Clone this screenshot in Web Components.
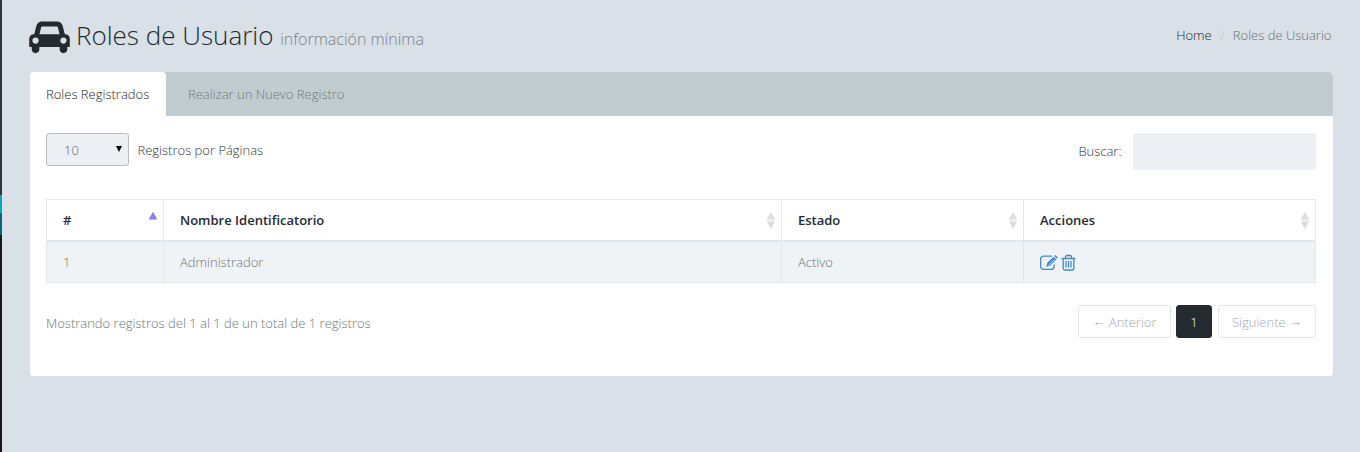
<!DOCTYPE html>
<html lang="es"><head><meta charset="utf-8"><title>Roles de Usuario</title>
<style>html,body{margin:0;height:452px;overflow:hidden}body{background:#d9e0e7;font:300 13px/18px "Open Sans",sans-serif;color:#707478}</style></head>
<body><app-shell>
<page-header slot="header">Roles de Usuario<span slot="subtitle">información mínima</span></page-header>
<tab-panel><table-tools></table-tools><roles-table></roles-table><table-footer></table-footer></tab-panel>
</app-shell>
<script>
const define=(name,html)=>customElements.define(name,class extends HTMLElement{
  constructor(){super();this.attachShadow({mode:'open'}).innerHTML='<style>*{box-sizing:border-box}</style>'+html;}
});
define('app-shell',`<style>:host{display:flex;height:452px}
.rail{width:2px;flex:none;background:linear-gradient(#2d353c 0 195px,#00acac 195px 213px,#006b6d 213px 235px,#14181d 235px)}
main{flex:1;padding:0 27px 0 28px}</style><div class="rail"></div><main><slot name="header"></slot><slot></slot></main>`);
define('page-header',`<style>:host{display:flex;justify-content:space-between;height:72px;color:#242a30}
.l{display:flex}svg{width:41px;height:35.500px;margin:19px 6px 0 -1px}
h1{margin:17px 0 0;font-weight:300;font-size:26px;line-height:36px;white-space:nowrap}small{font-size:16px;color:#7b8289}
nav{display:flex;margin:26px 1.500px 0 0;height:18px;color:#242a30}nav i{font-style:normal;color:#c0c4c9;padding:0 8.300px}nav span{color:#6c7074}</style>
<div class="l"><svg viewBox="0 0 2048 1792" fill="#242a30"><path d="M480 1088q0-66-47-113t-113-47-113 47-47 113 47 113 113 47 113-47 47-113zm36-320h1016l-89-357q-2-8-14-17.500t-21-9.500h-768q-9 0-21 9.500t-14 17.500zm1372 320q0-66-47-113t-113-47-113 47-47 113 47 113 113 47 113-47 47-113zm160-96v384q0 14-9 23t-23 9h-96v128q0 80-56 136t-136 56-136-56-56-136v-128h-1024v128q0 80-56 136t-136 56-136-56-56-136v-128h-96q-14 0-23-9t-9-23v-384q0-93 65.500-158.500t158.500-65.500h28l105-419q23-94 104-157.500t179-63.500h768q98 0 179 63.500t104 157.500l105 419h28q93 0 158.500 65.500t65.500 158.500z"/></svg>
<h1><slot></slot> <small><slot name="subtitle"></slot></small></h1></div><nav>Home<i>/</i><span>Roles de Usuario</span></nav>`);
define('tab-panel',`<style>:host{display:block;height:304px;background:#fff;border-radius:5px 5px 3px 3px}
.tabs{display:flex;height:44px;background:#c1ccd1;border-radius:5px 5px 0 0;line-height:44px;color:#6e787d}
.a{width:136px;padding-left:16px;background:#fff;color:#242a30;border-radius:4px 4px 0 0;margin-right:22px}.body{padding:17px 17px 0 16px}</style>
<div class="tabs"><div class="a">Roles Registrados</div><div>Realizar un Nuevo Registro</div></div><div class="body"><slot></slot></div>`);
define('table-tools',`<style>:host{display:flex;height:66px;color:#33383e;align-items:flex-start}
.s{width:83px;height:33px;border:1px solid #b8bdc2;border-radius:3px;background:#ecf0f5;display:flex;justify-content:space-between;padding:0 5px 0 17px;line-height:33px;color:#666}
svg{width:8px;height:6px;margin-top:12px}.t{margin:8px auto 0 8.500px}.b{margin:9px 11.500px 0 0}.f{width:183px;height:37px;border-radius:3px;background:#ecf0f5}</style>
<div class="s">10<svg viewBox="0 0 8 6"><path d="M1 0h6L4 6z"/></svg></div><div class="t">Registros por Páginas</div><div class="b">Buscar:</div><div class="f"></div>`);
define('sort-mark',`<style>:host{display:block;width:10px;height:17px}svg{display:block}.up{display:none}:host([up]) .up{display:block}:host([up]) .both{display:none}</style>
<svg class="both" width="10" height="17" viewBox="0 0 10 17" fill="#dcdcdc"><path d="M5 0l4 7H1zM1 10h8l-4 7z"/><path d="M1 7h8v3H1z" fill="#eee"/></svg>
<svg class="up" width="10" height="17" viewBox="0 0 10 17"><path d="M5 -.3L9.300 7.500H.7z" fill="#8084ea"/></svg>`);
define('action-icons',`<style>:host{display:flex;color:#428bca}svg{display:block;fill:none;stroke:currentColor}</style>
<svg width="21" height="18" viewBox="0 0 21 18"><path d="M12 2.100H3.600a3 3 0 0 0-3 3v7.300a3 3 0 0 0 3 3h7.500a3 3 0 0 0 3-3V10.500" stroke-width="1.300"/><path d="M6.300 12.900l1-4.200 6.300-6 2.800 2.800-6.300 6zM14.200 2l1.200-1 2.500 2.500-1 1.200z" fill="currentColor" stroke="none"/><path d="M8.700 11L14.200 5.700" stroke="#eff3f6" stroke-width=".7"/></svg>
<svg width="15" height="18" viewBox="0 0 15 18"><path d="M.5 4.500h14M2.200 5v9.500a1.500 1.500 0 0 0 1.500 1.500h7.600a1.500 1.500 0 0 0 1.500-1.500V5M4.500 4.500V3A1.500 1.500 0 0 1 6 1.500h3A1.500 1.500 0 0 1 10.500 3v1.500M5 7v6.500M7.500 7v6.500M10 7v6.500" stroke-width="1.300"/></svg>`);
define('roles-table',`<style>:host{display:block}.g{display:grid;grid-template-columns:117px 618px 242px 293px;width:1270px;height:84px;grid-template-rows:42px 40px;border:solid #e2e7eb;border-width:1px 0 1px 0}
.g>div{border-left:1px solid #e2e7eb;padding-left:16px;line-height:41px}.g>div:nth-child(4n){border-right:1px solid #e2e7eb}
.h{font-weight:600;color:#242a30;border-bottom:2px solid #e2e7eb;display:flex;justify-content:space-between}.h sort-mark{margin:12px 5px 0 0}.d{background:#eff3f6}.g>.k{padding-top:12px}</style>
<div class="g"><div class="h">#<sort-mark up></sort-mark></div><div class="h">Nombre Identificatorio<sort-mark></sort-mark></div><div class="h">Estado<sort-mark></sort-mark></div><div class="h">Acciones<sort-mark></sort-mark></div>
<div class="d">1</div><div class="d">Administrador</div><div class="d">Activo</div><div class="d k"><action-icons></action-icons></div></div>`);
define('table-footer',`<style>:host{display:flex;margin-top:22px}.i{margin:9px auto 0 0}.p{height:33px;border:1px solid #e2e7eb;border-radius:3px;line-height:33px;text-align:center;color:#a6a9ac}
.p b{font-weight:inherit;display:inline-block;transform:translateY(-1px)}
.on{width:36px;margin:0 6px 0 5px;background:#242a30;border-color:#242a30;color:#fff}</style>
<div class="i">Mostrando registros del 1 al 1 de un total de 1 registros</div><div class="p" style="width:93px"><b>←</b> Anterior</div><div class="p on">1</div><div class="p" style="width:98px">Siguiente <b>→</b></div>`);
</script></body></html>
